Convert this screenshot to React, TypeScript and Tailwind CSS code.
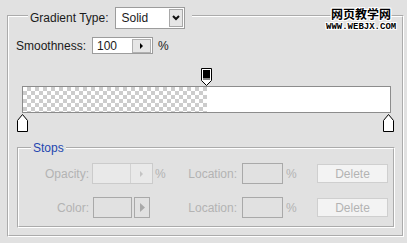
import React from "react";

const RightTri = ({ c = "#000", w = 4, h = 7 }: { c?: string; w?: number; h?: number }) => (
  <svg width={w} height={h} viewBox={`0 0 ${w} ${h}`}>
    <path d={`M0 0 L${w} ${h / 2} L0 ${h} Z`} fill={c} />
  </svg>
);

const OpacityStop = () => (
  <svg width="11" height="18" viewBox="0 0 11 18">
    <path d="M0.5 0.5 H10.5 V12.5 L5.5 17.5 L0.5 12.5 Z" fill="#fff" stroke="#000" />
    <rect x="2" y="2" width="7" height="8" fill="#000" />
    <rect x="2" y="10" width="7" height="2" fill="#888" />
  </svg>
);

const ColorStop = () => (
  <svg width="11" height="18" viewBox="0 0 11 18">
    <path d="M5.5 0.5 L10.5 6.5 V17.5 H0.5 V6.5 Z" fill="#fff" stroke="#000" />
  </svg>
);

export default function App() {
  const font = "font-['Liberation_Sans',Arial,sans-serif]";
  const dis = "text-[#b3b3b3]";
  return (
    <div className={`relative w-[407px] h-[243px] bg-[#e1e1e1] text-[12px] text-[#1a1a1a] ${font} overflow-hidden`}>
      <fieldset className="ml-[7px] w-[397px] border-2 [border-style:groove] border-white pb-[7px] min-w-0">
        <legend className="ml-[19px] px-[2px] pr-[7px]">
          <div className="flex items-start h-[32px] pt-[7px]">
            <span className="h-[22px] flex items-center leading-none">Gradient Type:</span>
            <div className="ml-[6px] w-[70px] h-[22px] bg-white border border-[#9c9c9c] flex items-center justify-between pl-[6px] pr-[1px]">
              <span className="leading-none">Solid</span>
              <div className="w-[14px] h-[18px] bg-[#e6e6e6] border border-[#a8a8a8] flex items-center justify-center">
                <svg width="8" height="6" viewBox="0 0 8 6">
                  <path d="M1 1 L4 4 L7 1" stroke="#111" strokeWidth="2" fill="none" />
                </svg>
              </div>
            </div>
          </div>
        </legend>

        <div className="mt-[5px] h-[17px] flex items-center pl-[7px]">
          <span className="w-[76px] leading-none">Smoothness:</span>
          <div className="w-[61px] h-[17px] bg-white border border-[#9c9c9c] flex items-center justify-between pl-[4px] pr-[1px]">
            <span className="leading-none">100</span>
            <div className="w-[19px] h-[14px] bg-[#e6e6e6] border border-[#b0b0b0] flex items-center justify-center">
              <RightTri w={3} h={6} />
            </div>
          </div>
          <span className="ml-[5px] leading-none">%</span>
        </div>

        <div className="ml-[13px] w-[369px] mt-[14px]">
          <div className="relative h-[18px]">
            <div className="absolute left-[179px] top-0">
              <OpacityStop />
            </div>
          </div>
          <div className="h-[27px] border border-[#8c8c8c] flex">
            <div className="w-1/2 h-full bg-[image:conic-gradient(#cccccc_25%,#ffffff_0_50%,#cccccc_0_75%,#ffffff_0)] bg-[size:8px_8px]" />
            <div className="w-1/2 h-full bg-white" />
          </div>
          <div className="relative h-[19px]">
            <div className="absolute left-[-5px] top-[1px]">
              <ColorStop />
            </div>
            <div className="absolute left-[361px] top-[1px]">
              <ColorStop />
            </div>
          </div>
        </div>

        <fieldset className="ml-[8px] mt-[9px] w-[378px] border-2 [border-style:groove] border-white pb-[8px] min-w-0">
          <legend className="ml-[12px] px-[2px] h-[14px] leading-[14px] text-[#2446b0]">Stops</legend>

          <div className="mt-[8px] h-[21px] flex items-center">
            <span className={`w-[70px] text-right leading-none ${dis}`}>Opacity:</span>
            <div className="ml-[3px] w-[61px] h-[21px] border border-[#cbcbcb] bg-[#e9e9e9] flex">
              <div className="flex-1" />
              <div className="w-[22px] h-full border-l border-[#d2d2d2] flex items-center justify-center">
                <RightTri c="#c4c4c4" w={3} h={6} />
              </div>
            </div>
            <span className={`ml-[2px] w-[15px] leading-none ${dis}`}>%</span>
            <span className={`w-[67px] text-right leading-none ${dis}`}>Location:</span>
            <div className="ml-[5px] w-[41px] h-[21px] border border-[#a9a9a9]" />
            <span className={`ml-[3px] w-[16px] leading-none ${dis}`}>%</span>
            <div className={`ml-[15px] w-[71px] h-[19px] border border-[#cfcfcf] bg-[#f3f3f3] flex items-center justify-center leading-none ${dis}`}>
              Delete
            </div>
          </div>

          <div className="mt-[13px] h-[21px] flex items-center">
            <span className={`w-[70px] text-right leading-none ${dis}`}>Color:</span>
            <div className="ml-[4px] w-[39px] h-[21px] border border-[#a9a9a9]" />
            <div className="ml-[2px] w-[16px] h-[21px] border border-[#a9a9a9] flex items-center justify-center">
              <RightTri c="#a9a9a9" w={5} h={9} />
            </div>
            <span className="w-[20px]" />
            <span className={`w-[67px] text-right leading-none ${dis}`}>Location:</span>
            <div className="ml-[5px] w-[41px] h-[21px] border border-[#a9a9a9]" />
            <span className={`ml-[3px] w-[16px] leading-none ${dis}`}>%</span>
            <div className={`ml-[15px] w-[71px] h-[19px] border border-[#cfcfcf] bg-[#f3f3f3] flex items-center justify-center leading-none ${dis}`}>
              Delete
            </div>
          </div>
        </fieldset>
      </fieldset>

      <div className="absolute top-[8px] left-[326px] flex flex-col items-center leading-none [text-shadow:1px_0_0_#fff,-1px_0_0_#fff,0_1px_0_#fff,0_-1px_0_#fff,1px_1px_0_#fff,-1px_-1px_0_#fff,1px_-1px_0_#fff,-1px_1px_0_#fff]">
        <span className="text-[12px] text-black font-['Noto_Sans_CJK_SC',sans-serif] font-bold">网页教学网</span>
        <span className="mt-[3px] text-[9px] text-black font-['Liberation_Mono',monospace] font-bold">WWW.WEBJX.COM</span>
      </div>
    </div>
  );
}
